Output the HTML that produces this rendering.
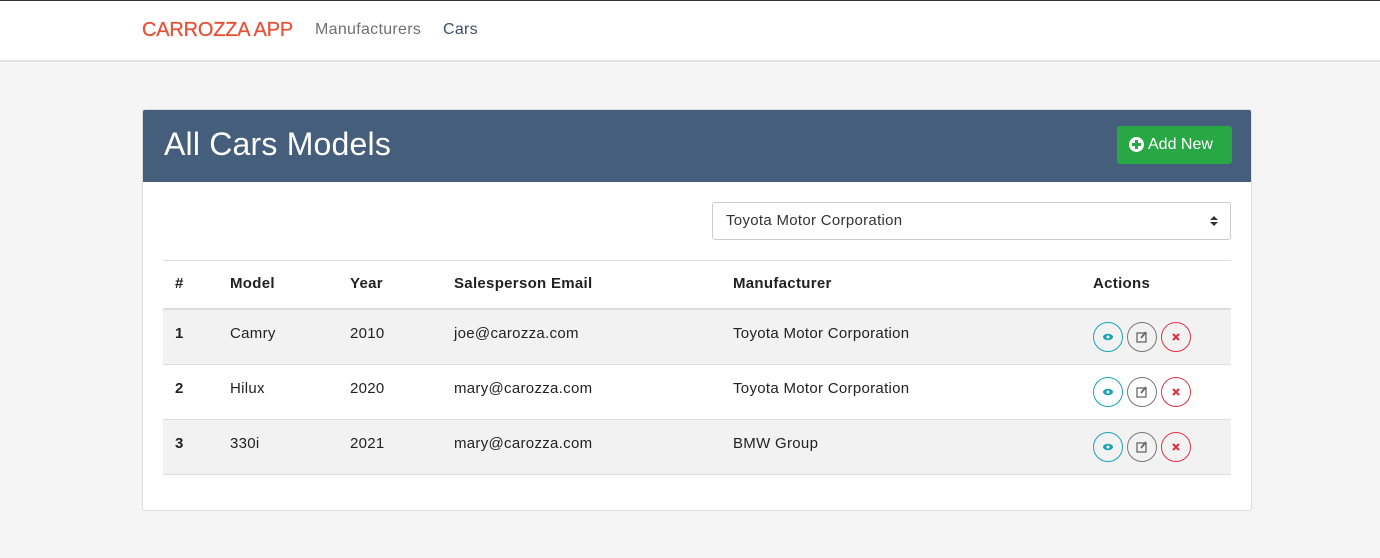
<!DOCTYPE html><html><head><style>
*{box-sizing:border-box;margin:0;padding:0}
body{width:1380px;height:558px;background:#f5f5f5;font-family:"Liberation Sans",sans-serif;color:#222;border-top:1px solid #333;position:relative;overflow:hidden}
.nav{position:absolute;top:0;left:0;width:1380px;height:61px;background:#fff;border-bottom:2px solid #e2e2e2}
.brand{position:absolute;left:142px;top:18px;font-size:20px;color:#e4533a;letter-spacing:-0.2px;-webkit-text-stroke:0.3px #e4533a}
.nl{position:absolute;top:20px;font-size:16px;color:#707070;letter-spacing:0.3px}
.card{position:absolute;left:142px;top:108px;width:1110px;height:402px;background:#fff;border:1px solid #ddd;border-radius:3px;overflow:hidden}
.hd{height:72px;background:#445e7c;position:relative}
.hd h1{position:absolute;left:21px;top:16px;font-size:32px;font-weight:normal;color:#fff;letter-spacing:0.2px}
.btn{position:absolute;left:974px;top:16px;width:115px;height:38px;background:#28a745;border-radius:3px;color:#fff;font-size:16px;line-height:38px;padding-left:31px}
.btn i{position:absolute;left:12px;top:11px;width:15px;height:15px;border-radius:50%;background:#fff}
.btn i:before,.btn i:after{content:"";position:absolute;background:#28a745;left:3px;top:6px;width:9px;height:3px}
.btn i:after{left:6px;top:3px;width:3px;height:9px}
.sel{position:absolute;left:569px;top:92px;width:519px;height:38px;border:1px solid #ccc;border-radius:3px;font-size:15px;line-height:36px;padding-left:13px;color:#333;letter-spacing:0.3px}
.sel:after{content:"";position:absolute;right:12px;top:13px;border:4px solid transparent;border-bottom:4px solid #333;border-top:0}
.sel:before{content:"";position:absolute;right:12px;top:19px;border:4px solid transparent;border-top:4px solid #333;border-bottom:0}
.tb{position:absolute;left:20px;top:150px;width:1068px;border-top:1px solid #ddd}
.r{position:relative;height:55px;border-bottom:1px solid #ddd;font-size:15px;letter-spacing:0.3px}
.r.h{height:49px;font-weight:bold;border-bottom:2px solid #ddd}
.r.s{background:#f2f2f2}
.r span{position:absolute;top:15px}
.r.h span{top:14px}
.c{position:absolute;top:12px;width:30px;height:30px;border-radius:50%;border:1px solid}
</style></head><body>
<div class="nav"><div class="brand">CARROZZA APP</div><div class="nl" style="left:315px">Manufacturers</div><div class="nl" style="left:443px;color:#3d4f66">Cars</div></div>
<div class="card">
<div class="hd"><h1>All Cars Models</h1><div class="btn"><i></i>Add New</div></div>
<div class="sel">Toyota Motor Corporation</div>
<div class="tb">
<div class="r h"><span style="left:12px">#</span><span style="left:67px">Model</span><span style="left:187px">Year</span><span style="left:291px">Salesperson Email</span><span style="left:570px">Manufacturer</span><span style="left:930px">Actions</span></div>
<div class="r s"><span style="left:12px;font-weight:bold">1</span><span style="left:67px">Camry</span><span style="left:187px">2010</span><span style="left:291px">joe@carozza.com</span><span style="left:570px">Toyota Motor Corporation</span>
<div class="c" style="left:930px;border-color:#17a2b8"><svg width="28" height="28"><ellipse cx="14" cy="14" rx="5" ry="3.2" fill="#17a2b8"/><circle cx="14" cy="14" r="1.5" fill="#fff"/></svg></div><div class="c" style="left:964px;border-color:#777"><svg width="28" height="28"><rect x="9" y="10" width="9" height="9" fill="none" stroke="#666" stroke-width="1.3"/><path d="M13 15l5-6" stroke="#666" stroke-width="1.8"/></svg></div><div class="c" style="left:998px;border-color:#dc3545"><svg width="28" height="28"><path d="M11 11l6 6M17 11l-6 6" stroke="#dc3545" stroke-width="2.2"/></svg></div></div>
<div class="r"><span style="left:12px;font-weight:bold">2</span><span style="left:67px">Hilux</span><span style="left:187px">2020</span><span style="left:291px">mary@carozza.com</span><span style="left:570px">Toyota Motor Corporation</span>
<div class="c" style="left:930px;border-color:#17a2b8"><svg width="28" height="28"><ellipse cx="14" cy="14" rx="5" ry="3.2" fill="#17a2b8"/><circle cx="14" cy="14" r="1.5" fill="#fff"/></svg></div><div class="c" style="left:964px;border-color:#777"><svg width="28" height="28"><rect x="9" y="10" width="9" height="9" fill="none" stroke="#666" stroke-width="1.3"/><path d="M13 15l5-6" stroke="#666" stroke-width="1.8"/></svg></div><div class="c" style="left:998px;border-color:#dc3545"><svg width="28" height="28"><path d="M11 11l6 6M17 11l-6 6" stroke="#dc3545" stroke-width="2.2"/></svg></div></div>
<div class="r s"><span style="left:12px;font-weight:bold">3</span><span style="left:67px">330i</span><span style="left:187px">2021</span><span style="left:291px">mary@carozza.com</span><span style="left:570px">BMW Group</span>
<div class="c" style="left:930px;border-color:#17a2b8"><svg width="28" height="28"><ellipse cx="14" cy="14" rx="5" ry="3.2" fill="#17a2b8"/><circle cx="14" cy="14" r="1.5" fill="#fff"/></svg></div><div class="c" style="left:964px;border-color:#777"><svg width="28" height="28"><rect x="9" y="10" width="9" height="9" fill="none" stroke="#666" stroke-width="1.3"/><path d="M13 15l5-6" stroke="#666" stroke-width="1.8"/></svg></div><div class="c" style="left:998px;border-color:#dc3545"><svg width="28" height="28"><path d="M11 11l6 6M17 11l-6 6" stroke="#dc3545" stroke-width="2.2"/></svg></div></div>
</div></div>
</body></html>
